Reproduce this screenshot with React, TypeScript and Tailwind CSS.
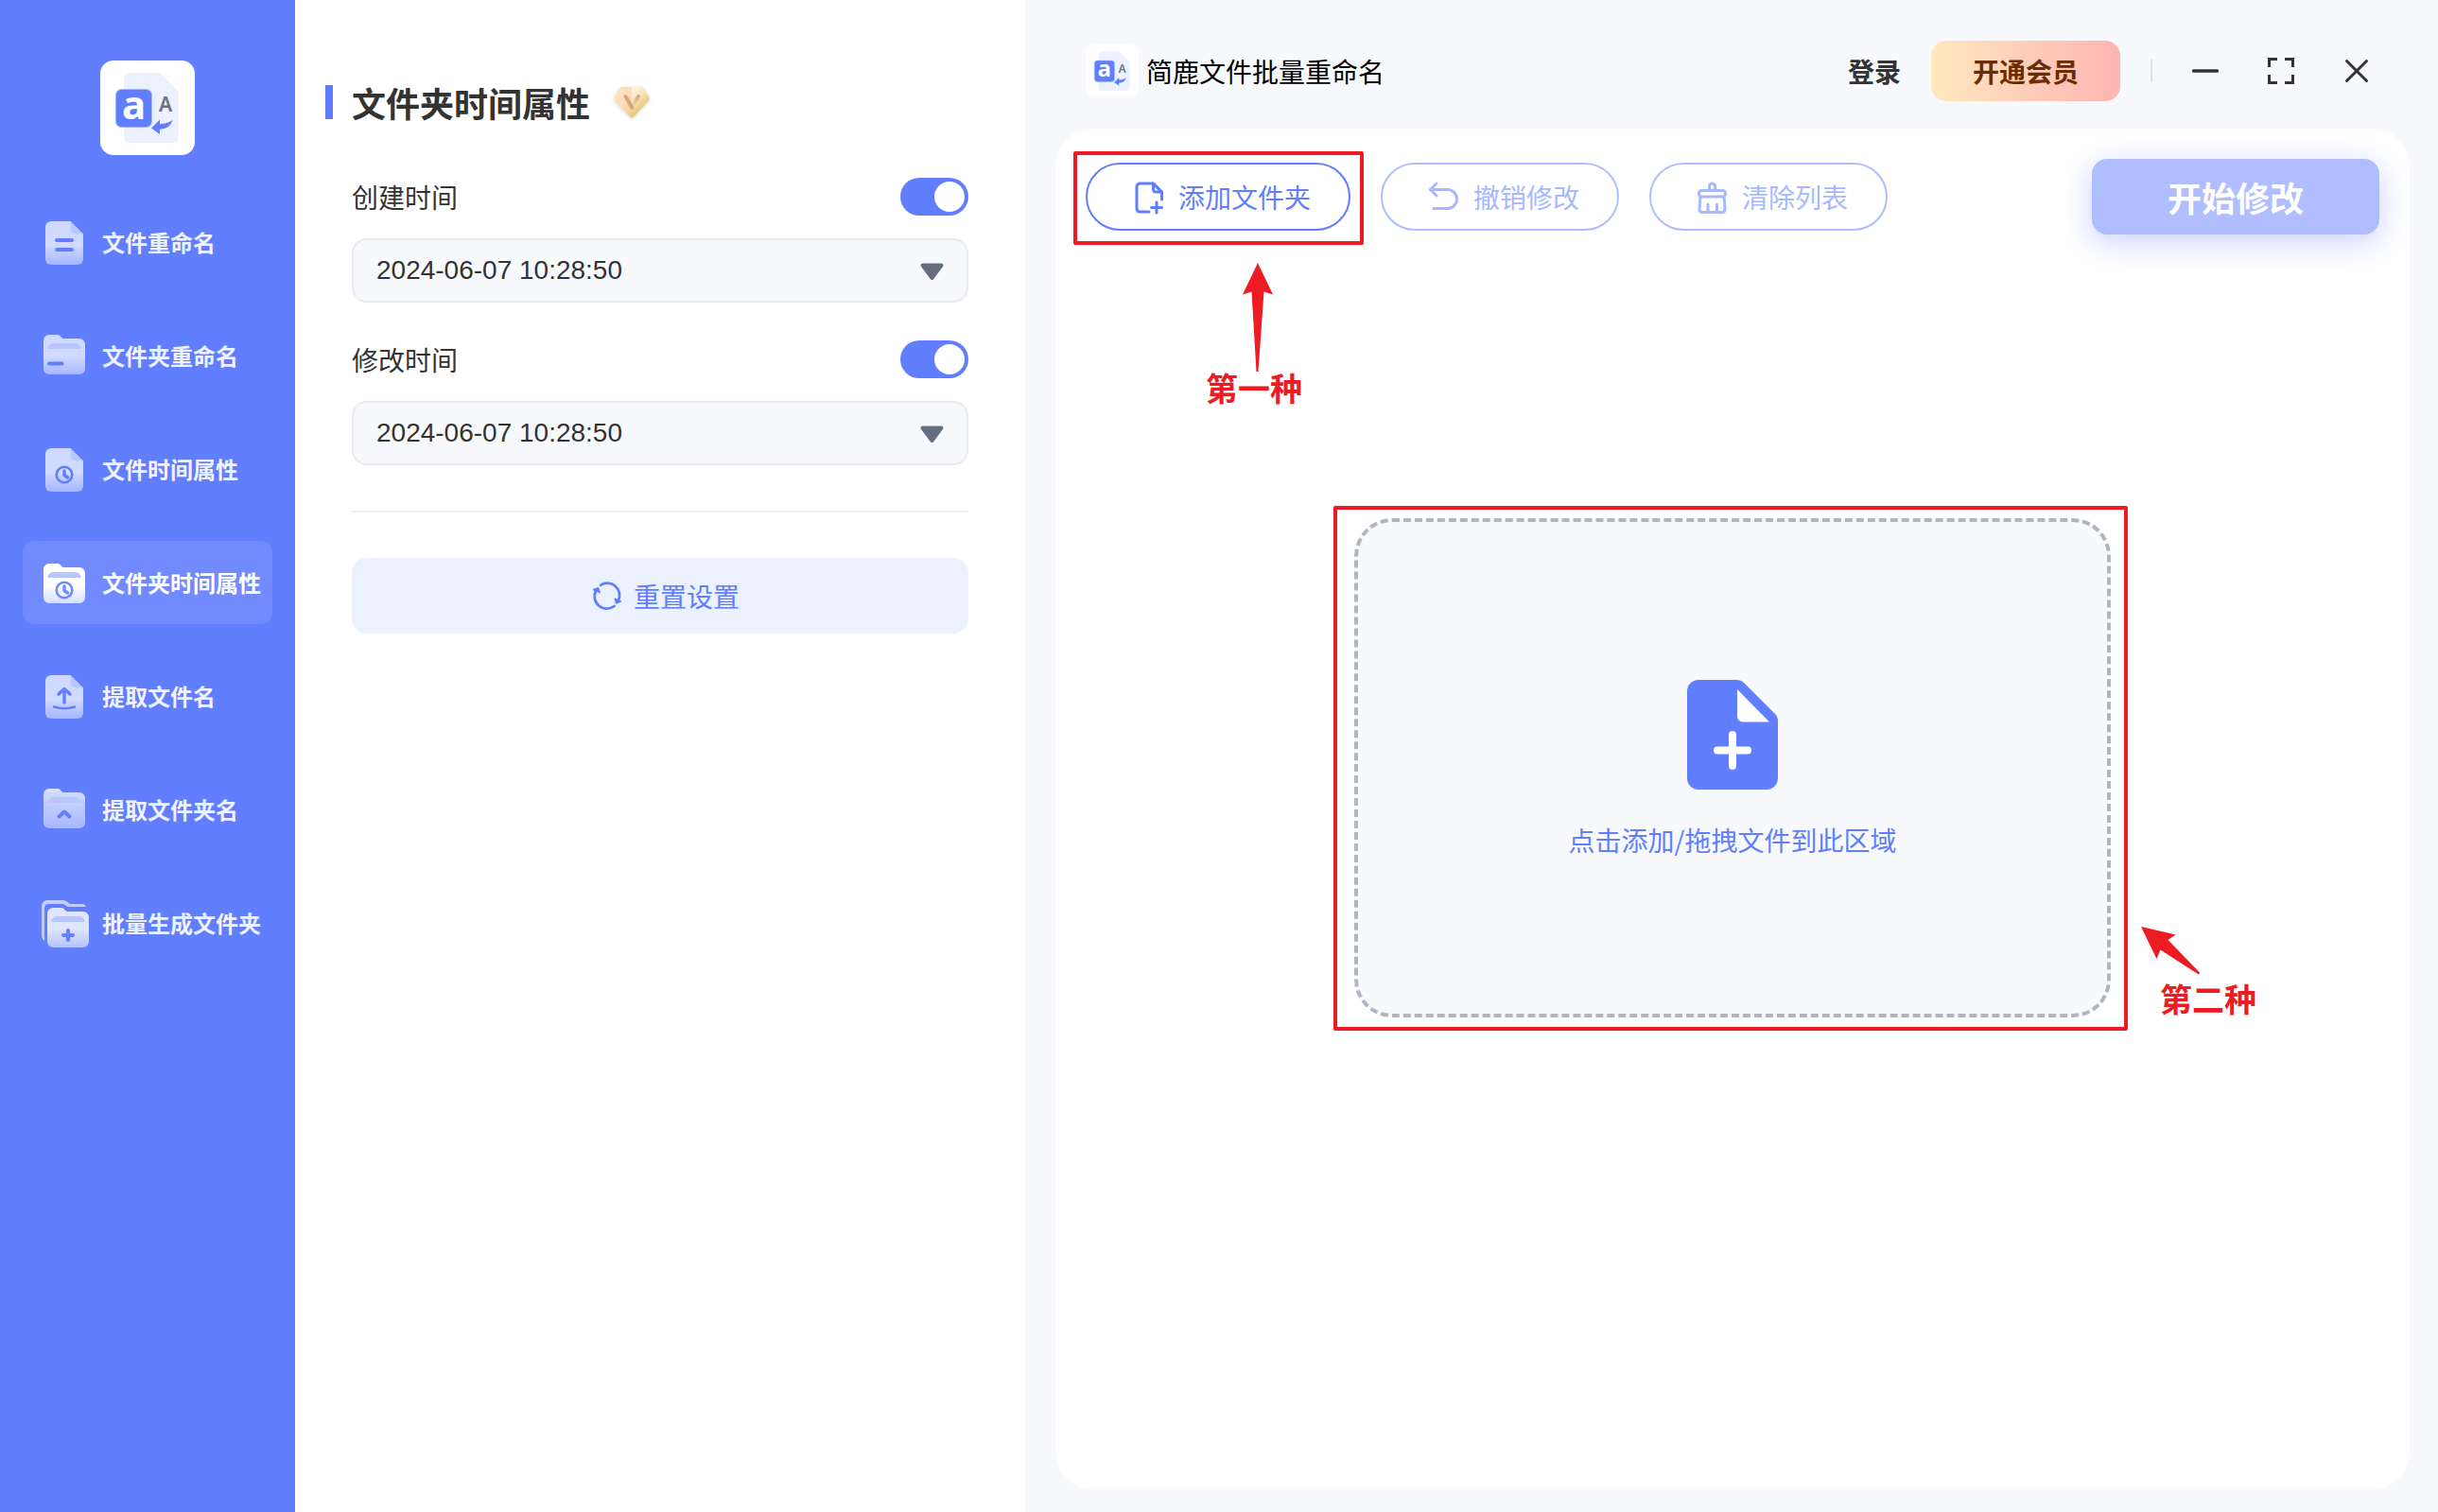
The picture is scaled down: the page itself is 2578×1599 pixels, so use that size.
import { useState, type ReactNode } from 'react';

type IconKind = 'lines' | 'dash' | 'clock' | 'upload' | 'chevron' | 'plus';

interface NavItem {
  label: string;
  shape: 'file' | 'folder' | 'folders';
  kind: IconKind;
}

const navItems: NavItem[] = [
  { label: '文件重命名', shape: 'file', kind: 'lines' },
  { label: '文件夹重命名', shape: 'folder', kind: 'dash' },
  { label: '文件时间属性', shape: 'file', kind: 'clock' },
  { label: '文件夹时间属性', shape: 'folder', kind: 'clock' },
  { label: '提取文件名', shape: 'file', kind: 'upload' },
  { label: '提取文件夹名', shape: 'folder', kind: 'chevron' },
  { label: '批量生成文件夹', shape: 'folders', kind: 'plus' },
];

const timeFields = [
  { id: 'created', label: '创建时间', value: '2024-06-07 10:28:50' },
  { id: 'modified', label: '修改时间', value: '2024-06-07 10:28:50' },
];

function AppLogo({ className }: { className: string }) {
  return (
    <svg className={className} viewBox="0 0 100 100" aria-hidden="true">
      <rect width="100" height="100" rx="14" fill="#fff" />
      <path d="M31 13h32l20 20v48a6 6 0 0 1-6 6H31a6 6 0 0 1-6-6V19a6 6 0 0 1 6-6z" fill="#ebf1ff" />
      <rect x="16.5" y="30.5" width="38" height="40" rx="6" fill="#617eff" stroke="#a3b6ff" />
      <text x="35.5" y="61.5" textAnchor="middle" fontFamily="'Noto Sans', sans-serif" fontWeight="700" fontSize="42" fill="#fff">
        a
      </text>
      <text x="69" y="54" textAnchor="middle" fontFamily="'Noto Sans', sans-serif" fontWeight="600" fontSize="21" fill="#6b7280">
        A
      </text>
      <path d="M54 71.500L63 62.500V67Q71 67 76.500 63Q74 72 63 72.800V78z" fill="#617eff" />
    </svg>
  );
}

function NavGlyph({ kind, color }: { kind: IconKind; color: string }) {
  const line = { fill: 'none', stroke: color, strokeLinecap: 'round', strokeLinejoin: 'round' } as const;
  switch (kind) {
    case 'lines':
      return <path d="M16 22h16M16 32h16" strokeWidth="4" {...line} />;
    case 'dash':
      return <path d="M8 32.500h13.500" strokeWidth="4" {...line} />;
    case 'clock':
      return (
        <g {...line}>
          <circle cx="24" cy="30" r="8.300" strokeWidth="2.600" />
          <path d="M24 26v4.500l3.500 2.500" strokeWidth="3.400" />
        </g>
      );
    case 'upload':
      return (
        <g {...line}>
          <path d="M24 31V17.500M18 22l6-5.500 6 5.500" strokeWidth="3.400" />
          <path d="M13 35.500q11 3.500 22 0" strokeWidth="2.600" />
        </g>
      );
    case 'chevron':
      return <path d="M18.500 31.500l5.500-5 5.500 5" strokeWidth="4" {...line} />;
    case 'plus':
      return <path d="M28 32v10M23 37h10" strokeWidth="4" {...line} />;
  }
}

const FOLDER = 'M8 2h9q2.500 0 4 2.500Q22 6 23.500 6H40a6 6 0 0 1 6 6v26a6 6 0 0 1-6 6H8a6 6 0 0 1-6-6V8a6 6 0 0 1 6-6z';

function NavIcon({ item, active }: { item: NavItem; active: boolean }) {
  const id = `nav-${item.shape}-${item.kind}`;
  const bright = active || item.shape === 'folders';
  const top = active ? '#ffffff' : bright ? '#dfe5ff' : '#d0d9ff';
  const bottom = active ? '#d6deff' : bright ? '#b4c2ff' : '#a6b7ff';
  const color = active ? '#718bff' : '#617eff';
  return (
    <svg className="size-12 shrink-0 overflow-visible" viewBox="0 0 48 48" aria-hidden="true">
      <defs>
        <linearGradient id={id} x1="0" y1="0" x2="0" y2="1">
          <stop offset="0" stopColor={item.kind === 'chevron' ? '#dfe5ff' : top} />
          <stop offset={item.kind === 'chevron' ? '0.1' : '0.55'} stopColor={top} />
          <stop offset="1" stopColor={bottom} />
        </linearGradient>
      </defs>
      {item.shape === 'file' && (
        <>
          <path d="M10 2h20.500L44 15.500V42a6 6 0 0 1-6 6H10a6 6 0 0 1-6-6V8a6 6 0 0 1 6-6z" fill={`url(#${id})`} />
          <path d="M30.500 2L44 15.500H36.500a6 6 0 0 1-6-6z" fill="#bac7ff" />
          <NavGlyph kind={item.kind} color={color} />
        </>
      )}
      {item.shape === 'folder' && (
        <g transform={active ? 'translate(0 2)' : undefined}>
          <path d={FOLDER} fill={`url(#${id})`} />
          <path d="M6 17q1.500-6 6-6h24q4.500 0 6 6z" fill="#bac7ff" />
          <NavGlyph kind={item.kind} color={color} />
        </g>
      )}
      {item.shape === 'folders' && (
        <>
          <path
            d="M3 43Q0 41 0 37V6a6 6 0 0 1 6-6h17q3 0 5 2.500Q29.500 4 31 4h12q3 0 4 3H29q-2 0-3.500-1.500T22 4H8Q3 4 3 9z"
            fill="#c0ccff"
          />
          <g transform="translate(4 6)">
            <path d={FOLDER} fill={`url(#${id})`} />
            <path d="M6 17q1.500-6 6-6h24q4.500 0 6 6z" fill="#bac7ff" />
          </g>
          <NavGlyph kind={item.kind} color={color} />
        </>
      )}
    </svg>
  );
}

function VipBadge() {
  return (
    <svg className="size-12 overflow-visible drop-shadow-sm" viewBox="0 0 48 48" aria-hidden="true">
      <defs>
        <linearGradient id="vip-left" x1="0" y1="0" x2="1" y2="1">
          <stop offset="0" stopColor="#ffe6b8" />
          <stop offset="0.55" stopColor="#ffdcc0" />
          <stop offset="1" stopColor="#efca80" />
        </linearGradient>
        <linearGradient id="vip-right" x1="0" y1="0" x2="0.500" y2="1">
          <stop offset="0" stopColor="#fff6e8" />
          <stop offset="0.4" stopColor="#f8e5bd" />
          <stop offset="1" stopColor="#e0b858" />
        </linearGradient>
        <linearGradient id="vip-stroke" x1="1" y1="0" x2="0" y2="1">
          <stop offset="0" stopColor="#d6ab7c" />
          <stop offset="1" stopColor="#f1dcb8" />
        </linearGradient>
      </defs>
      <path d="M24 8H14q-2 0-3.500 2L6 18.500Q4.500 21 6.500 23L22 39.500q1 1 2 1z" fill="url(#vip-left)" />
      <path d="M24 8h10q2 0 3.500 2l4.500 8.500q1.500 2.500-.5 4.500L26 39.500q-1 1-2 1z" fill="url(#vip-right)" />
      <path d="M31 18l-6 10" stroke="url(#vip-stroke)" strokeWidth="4" strokeLinecap="round" />
      <path d="M17.500 18l7 12" stroke="#daa67a" strokeWidth="4" strokeLinecap="round" />
    </svg>
  );
}

function AddFileIcon() {
  return (
    <svg className="size-10" viewBox="0 0 40 40" fill="none" stroke="currentColor" strokeWidth="3" strokeLinecap="round" strokeLinejoin="round" aria-hidden="true">
      <path d="M25 36H16q-4 0-4-4V10q0-4 4-4h13.500L38.500 15v8" />
      <path d="M29.500 6v6q0 3 3 3h6z" />
      <path d="M33 26v11M27.500 31.500h11" />
    </svg>
  );
}

function UndoIcon() {
  return (
    <svg className="size-10" viewBox="0 0 40 40" fill="none" stroke="currentColor" strokeWidth="3" strokeLinecap="round" strokeLinejoin="round" aria-hidden="true">
      <path d="M17 6l-6.500 6.500L17 19" />
      <path d="M10.500 12.500H28.500a10 10 0 0 1 0 20H14" />
    </svg>
  );
}

function ClearIcon() {
  return (
    <svg className="size-10" viewBox="0 0 40 40" fill="none" stroke="currentColor" strokeWidth="3" strokeLinecap="round" strokeLinejoin="round" aria-hidden="true">
      <path d="M21.500 13V9a3 3 0 0 1 6 0v4" />
      <rect x="10.500" y="13.500" width="28" height="6.500" rx="3" />
      <path d="M12 20l-1 13q0 3.500 3 3.500h21q3 0 3-3.500l-1-13M20 28v8M29.500 28v8" />
    </svg>
  );
}

function ResetIcon() {
  return (
    <svg className="size-8" viewBox="0 0 32 32" fill="none" stroke="currentColor" strokeWidth="2.800" strokeLinecap="round" aria-hidden="true">
      <path d="M9 4.800A13 13 0 0 1 28 21" />
      <path d="M23.500 27A13 13 0 0 1 4.200 10.500" />
      <path d="M1.500 9.500l5-1.800 1.800 4.800z" fill="currentColor" strokeWidth="1.400" strokeLinejoin="round" />
      <path d="M30.500 22.200l-5 1.800-1.200-5z" fill="currentColor" strokeWidth="1.400" strokeLinejoin="round" />
    </svg>
  );
}

function ToolButton({ icon, children, disabled }: { icon: ReactNode; children: ReactNode; disabled?: boolean }) {
  return (
    <button
      type="button"
      disabled={disabled}
      className="flex h-18 items-center gap-4 rounded-full border-2 border-[#617eff] px-10 text-[28px] text-[#617eff] disabled:border-[#b0beff] disabled:text-[#a6b8ff]"
    >
      {icon}
      <span>{children}</span>
    </button>
  );
}

function Sidebar() {
  const [active, setActive] = useState(3);
  return (
    <aside className="flex w-78 shrink-0 flex-col items-center bg-[#617eff] px-6 pt-16">
      <AppLogo className="size-25" />
      <nav className="mt-12 flex w-full flex-col gap-8">
        {navItems.map((item, i) => (
          <button
            key={item.label}
            type="button"
            onClick={() => setActive(i)}
            className={`flex h-22 items-center gap-4 rounded-xl pl-5 text-2xl font-bold whitespace-nowrap ${
              i === active ? 'bg-[#718bff] text-white' : 'text-[#eff2ff]'
            }`}
          >
            <NavIcon item={item} active={i === active} />
            {item.label}
          </button>
        ))}
      </nav>
    </aside>
  );
}

function Settings() {
  return (
    <section className="w-193 shrink-0 bg-white pt-[84px] pr-15 pl-8 text-[#333]">
      <div className="flex h-12 items-center gap-5">
        <span className="h-9 w-2 bg-[#617eff]" />
        <h1 className="text-4xl font-bold">文件夹时间属性</h1>
        <VipBadge />
      </div>

      <div className="mt-14 pl-7">
        <div className="flex flex-col gap-10">
          {timeFields.map((field) => (
            <div key={field.id}>
              <div className="flex h-10 items-center justify-between">
                <label htmlFor={`${field.id}-on`} className="text-[28px]">
                  {field.label}
                </label>
                <input
                  id={`${field.id}-on`}
                  type="checkbox"
                  role="switch"
                  defaultChecked
                  className="flex h-10 w-18 appearance-none items-center rounded-full bg-gray-300 px-1 before:size-8 before:rounded-full before:bg-white checked:justify-end checked:bg-[#617eff]"
                />
              </div>
              <div className="relative mt-6">
                <select
                  aria-label={field.label}
                  className="h-17 w-full appearance-none rounded-2xl border-2 border-[#e9eaee] bg-[#f7f9fd] px-6 font-['Liberation_Sans',sans-serif] text-[28px]"
                >
                  <option>{field.value}</option>
                </select>
                <svg className="pointer-events-none absolute top-6 right-6 h-6 w-7" viewBox="0 0 28 24" aria-hidden="true">
                  <path d="M3.500 4.500h20L13.500 18z" fill="#646e80" stroke="#646e80" strokeWidth="4" strokeLinejoin="round" />
                </svg>
              </div>
            </div>
          ))}
        </div>

        <hr className="mt-12 border-t-2 border-[#f0f0f1]" />

        <button
          type="button"
          className="mt-12 flex h-20 w-full items-center justify-center gap-3 rounded-2xl bg-[#ebf1ff] pl-3 text-[28px] text-[#617eff]"
        >
          <ResetIcon />
          重置设置
        </button>
      </div>
    </section>
  );
}

function TitleBar() {
  return (
    <header className="flex h-34 items-center pt-[14px] pr-[66px] pl-16">
      <AppLogo className="size-14" />
      <span className="ml-2 text-[28px] text-black">简鹿文件批量重命名</span>
      <div className="ml-auto flex items-center gap-8">
        <button type="button" className="text-[28px] font-bold text-[#333]">
          登录
        </button>
        <button
          type="button"
          className="h-16 w-50 rounded-2xl bg-linear-to-r from-[#ffe9bd] via-[#fdceba] to-[#feb5b2] text-[28px] font-bold text-[#6b2c00]"
        >
          开通会员
        </button>
        <span className="h-6 w-[2px] bg-[#dfe1e6]" />
        <div className="flex gap-10 pl-1 text-[#333]">
          <button type="button" aria-label="最小化">
            <svg className="size-10" viewBox="0 0 40 40" stroke="currentColor" strokeWidth="3.500" strokeLinecap="round">
              <path d="M7.500 20h25" />
            </svg>
          </button>
          <button type="button" aria-label="最大化">
            <svg className="size-10" viewBox="0 0 40 40" fill="none" stroke="currentColor" strokeWidth="3">
              <path d="M7.500 16V7.500H16M24 7.500h8.500V16M32.500 24v8.500H24M16 32.500H7.500V24" />
            </svg>
          </button>
          <button type="button" aria-label="关闭">
            <svg className="size-10" viewBox="0 0 40 40" stroke="currentColor" strokeWidth="3" strokeLinecap="round">
              <path d="M9.500 9.500l21 21M30.500 9.500l-21 21" />
            </svg>
          </button>
        </div>
      </div>
    </header>
  );
}

function Workspace() {
  return (
    <main className="mr-[30px] mb-6 ml-8 flex-1 rounded-[40px] bg-white p-8">
      <div className="flex h-20 items-center gap-8">
        <div className="relative">
          <ToolButton icon={<AddFileIcon />}>添加文件夹</ToolButton>
          {/* First hint */}
          <div className="pointer-events-none absolute -top-3 -right-[14px] -bottom-[15px] -left-[13px] rounded-xs border-4 border-[#ed1c24]" />
          <div className="pointer-events-none absolute top-full left-10 mt-[34px] flex w-full flex-col items-center pr-1 text-[34px] leading-8 font-bold text-[#ed1c24]">
            <svg className="h-[116px] w-8 translate-x-1 overflow-visible" viewBox="0 0 32 116" fill="currentColor" aria-hidden="true">
              <path d="M16 0L32 33.500 22.500 30.500 16.500 115H14.500L9.500 30.500 0 33.500z" />
            </svg>
            <span>第一种</span>
          </div>
        </div>
        <ToolButton icon={<UndoIcon />} disabled>
          撤销修改
        </ToolButton>
        <ToolButton icon={<ClearIcon />} disabled>
          清除列表
        </ToolButton>
        <button
          type="button"
          disabled
          className="ml-auto h-20 w-76 rounded-2xl bg-[#b0beff] text-4xl font-bold text-white shadow-[0_8px_32px_rgba(97,126,255,0.35)]"
        >
          开始修改
        </button>
      </div>

      <div className="relative mx-auto mt-75 w-200">
        <button
          type="button"
          className="flex h-132 w-full flex-col items-center justify-center gap-8 rounded-[40px] border-4 border-dashed border-[#b0b6c0] bg-[#f7f9fd] pt-1 text-[28px] text-[#617eff]"
        >
          <svg className="h-29 w-24" viewBox="0 0 96 116" aria-hidden="true">
            <path
              d="M12 0h41q4 0 7 3l32.500 32.500Q96 39 96 43v61a12 12 0 0 1-12 12H12a12 12 0 0 1-12-12V12A12 12 0 0 1 12 0z"
              fill="#617eff"
            />
            <path d="M53 10l34 34.500H59a6 6 0 0 1-6-6z" fill="#fff" />
            <path d="M48 58v33M32 74.500h32" stroke="#fff" strokeWidth="8" strokeLinecap="round" />
          </svg>
          <span>点击添加/拖拽文件到此区域</span>
        </button>
        {/* Second hint */}
        <div className="pointer-events-none absolute -top-[13px] -right-[18px] -bottom-[14px] -left-[22px] rounded-xs border-4 border-[#ed1c24]" />
        <div className="pointer-events-none absolute top-108 left-full ml-8 text-[34px] leading-8 font-bold whitespace-nowrap text-[#ed1c24]">
          <svg className="h-[52px] w-16" viewBox="0 0 64 52" fill="currentColor" aria-hidden="true">
            <path d="M0 0L36.500 8.500 28.500 14 62 48.500Q62 50.500 60 50L20.500 24.500 16.500 34z" />
          </svg>
          <span className="ml-5 block pt-2">第二种</span>
        </div>
      </div>
    </main>
  );
}

export default function App() {
  return (
    <div className="flex min-h-screen bg-[#f7f9fd] font-['Noto_Sans_CJK_SC',sans-serif]">
      <Sidebar />
      <Settings />
      <div className="flex min-w-0 flex-1 flex-col">
        <TitleBar />
        <Workspace />
      </div>
    </div>
  );
}
